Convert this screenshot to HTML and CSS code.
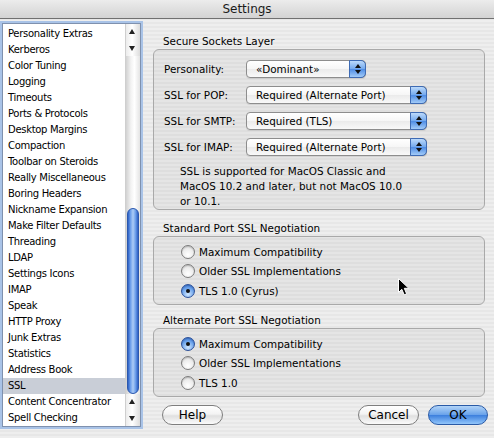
FILE: index.html
```html
<!DOCTYPE html>
<html>
<head>
<meta charset="utf-8">
<title>Settings</title>
<link rel="stylesheet" href="styles.css">
</head>
<body>
<div class="window">
  <div class="titlebar">Settings</div>
  <div class="main">
    <div class="list">
      <ul class="items">
        <li>Personality Extras</li>
        <li>Kerberos</li>
        <li>Color Tuning</li>
        <li>Logging</li>
        <li>Timeouts</li>
        <li>Ports &amp; Protocols</li>
        <li>Desktop Margins</li>
        <li>Compaction</li>
        <li>Toolbar on Steroids</li>
        <li>Really Miscellaneous</li>
        <li>Boring Headers</li>
        <li>Nickname Expansion</li>
        <li>Make Filter Defaults</li>
        <li>Threading</li>
        <li>LDAP</li>
        <li>Settings Icons</li>
        <li>IMAP</li>
        <li>Speak</li>
        <li>HTTP Proxy</li>
        <li>Junk Extras</li>
        <li>Statistics</li>
        <li>Address Book</li>
        <li class="selected">SSL</li>
        <li>Content Concentrator</li>
        <li>Spell Checking</li>
      </ul>
      <div class="scrollbar">
        <div class="arrow up"></div>
        <div class="arrow down"></div>
        <div class="track"><div class="thumb"></div></div>
        <div class="arrow up"></div>
        <div class="arrow down"></div>
      </div>
    </div>
    <div class="panel">
      <div class="group-label">Secure Sockets Layer</div>
      <div class="group ssl">
        <div class="field"><span class="label">Personality:</span><div class="popup short"><span class="value">«Dominant»</span><span class="stepper"></span></div></div>
        <div class="field"><span class="label">SSL for POP:</span><div class="popup"><span class="value">Required (Alternate Port)</span><span class="stepper"></span></div></div>
        <div class="field"><span class="label">SSL for SMTP:</span><div class="popup"><span class="value">Required (TLS)</span><span class="stepper"></span></div></div>
        <div class="field"><span class="label">SSL for IMAP:</span><div class="popup"><span class="value">Required (Alternate Port)</span><span class="stepper"></span></div></div>
        <p class="note">SSL is supported for MacOS Classic and<br>MacOS 10.2 and later, but not MacOS 10.0<br>or 10.1.</p>
      </div>
      <div class="group-label">Standard Port SSL Negotiation</div>
      <div class="group radios">
        <div class="radio-row"><span class="radio"></span><span>Maximum Compatibility</span></div>
        <div class="radio-row"><span class="radio"></span><span>Older SSL Implementations</span></div>
        <div class="radio-row"><span class="radio on"></span><span>TLS 1.0 (Cyrus)</span></div>
      </div>
      <div class="group-label">Alternate Port SSL Negotiation</div>
      <div class="group radios">
        <div class="radio-row"><span class="radio on"></span><span>Maximum Compatibility</span></div>
        <div class="radio-row"><span class="radio"></span><span>Older SSL Implementations</span></div>
        <div class="radio-row"><span class="radio"></span><span>TLS 1.0</span></div>
      </div>
      <div class="buttons">
        <div class="btn help">Help</div>
        <div class="btn">Cancel</div>
        <div class="btn default">OK</div>
      </div>
    </div>
  </div>
  <svg class="cursor" width="14" height="20" viewBox="0 0 14 20"><path d="M1.5 1.5 L1.5 15.5 L4.8 12.3 L7.2 17.8 L9.6 16.8 L7.3 11.3 L11.8 11.3 Z" fill="#000" stroke="#fff" stroke-width="1" stroke-linejoin="round"/></svg>
</div>
</body>
</html>
```
FILE: styles.css
```css
html, body {
  margin: 0;
  padding: 0;
}
body {
  width: 494px;
  height: 438px;
  overflow: hidden;
  font-family: "DejaVu Sans", "Liberation Sans", sans-serif;
  font-size: 10.4px;
  color: #000;
  background: repeating-linear-gradient(to bottom, #eeeeee 0 2px, #e7e7e7 2px 4px);
}
.window {
  position: relative;
  height: 438px;
}
.titlebar {
  height: 18px;
  line-height: 18px;
  border-bottom: 1px solid #707070;
  background: linear-gradient(#ececec, #d3d3d3);
  text-align: center;
  font-size: 12px;
  color: #1a1a1a;
}
.main {
  display: flex;
  padding: 4px 0 0 2px;
}
.list {
  display: flex;
  width: 137px;
  height: 402px;
  border: 1px solid #7f91ae;
  box-shadow: 0 0 0 2px #a9c3e7;
  background: #fff;
}
.items {
  flex: 1;
  list-style: none;
  margin: 0;
  padding: 2px 0 0 0;
  overflow: hidden;
}
.items li {
  height: 16px;
  line-height: 16px;
  padding-left: 5px;
  font-size: 10px;
  letter-spacing: -0.3px;
  white-space: nowrap;
}
.items li.selected {
  background: #c9ced7;
}
.scrollbar {
  width: 15px;
  box-sizing: border-box;
  border-left: 1px solid #cfcfcf;
  display: flex;
  flex-direction: column;
}
.arrow {
  height: 16px;
  position: relative;
  background: linear-gradient(to right, #ececec, #ffffff 45%, #dcdcdc);
}
.arrow::before {
  content: "";
  position: absolute;
  left: 3px;
  top: 5px;
  border-left: 3.5px solid transparent;
  border-right: 3.5px solid transparent;
}
.arrow.up::before {
  border-bottom: 5px solid #222;
}
.arrow.down::before {
  top: 6px;
  border-top: 5px solid #222;
}
.track {
  flex: 1;
  display: flex;
  flex-direction: column;
  justify-content: flex-end;
  padding: 0 1px;
  background: linear-gradient(to right, #d2d2d2, #f2f2f2 35%, #ffffff 60%, #e4e4e4);
}
.thumb {
  height: 186px;
  box-sizing: border-box;
  border-radius: 7px;
  border: 1px solid #2b58ae;
  background: linear-gradient(to right, #2d60c4, #6d9fea 25%, #acccf6 50%, #6d9fea 75%, #2d60c4);
}
.panel {
  margin-left: 12px;
  width: 335px;
  padding-top: 10px;
}
.group-label {
  height: 16px;
  line-height: 16px;
  padding-left: 10px;
}
.group {
  width: 332px;
  box-sizing: border-box;
  border: 1px solid #a9a9a9;
  border-radius: 6px;
  background: rgba(0, 0, 0, 0.035);
}
.group.ssl {
  height: 161px;
  padding: 10px 0 0 10px;
  margin-bottom: 10px;
}
.field {
  display: flex;
  align-items: center;
  height: 18px;
  margin-bottom: 8px;
}
.label {
  width: 82px;
}
.popup {
  display: flex;
  align-items: center;
  width: 181px;
  height: 18px;
  box-sizing: border-box;
  padding-left: 9px;
  border: 1px solid #8d8d8d;
  border-radius: 4px;
  background: linear-gradient(#ffffff, #f6f6f6 50%, #ebebeb 52%, #f9f9f9);
  box-shadow: 0 1px 0 rgba(0, 0, 0, 0.08);
}
.popup.short {
  width: 120px;
}
.stepper {
  position: relative;
  width: 17px;
  height: 18px;
  box-sizing: border-box;
  margin: -1px -1px -1px auto;
  border: 1px solid #3e6bb4;
  border-radius: 0 5px 5px 0;
  background: linear-gradient(#bcdafb, #72a8ed 50%, #4f8de5 52%, #a2cbf8);
}
.stepper::before,
.stepper::after {
  content: "";
  position: absolute;
  left: 4.5px;
  border-left: 3px solid transparent;
  border-right: 3px solid transparent;
}
.stepper::before {
  top: 3px;
  border-bottom: 4px solid #111;
}
.stepper::after {
  bottom: 3px;
  border-top: 4px solid #111;
}
.note {
  margin: 0;
  padding-left: 16px;
  line-height: 15px;
}
.group.radios {
  height: 69px;
  padding: 5px 0 0 27px;
}
.group.radios.first {
  margin-bottom: 7px;
}
.group-label + .group.radios {
  margin-bottom: 7px;
}
.radio-row {
  display: flex;
  align-items: center;
  gap: 4px;
  height: 19.5px;
}
.radio {
  position: relative;
  width: 14px;
  height: 14px;
  box-sizing: border-box;
  border-radius: 50%;
  border: 1px solid #7c7c7c;
  background: radial-gradient(circle at 50% 72%, #ffffff, #ececec 55%, #c8c8c8);
  box-shadow: inset 0 1px 1px rgba(0, 0, 0, 0.15);
}
.radio.on {
  border-color: #2b4f98;
  background: radial-gradient(circle at 50% 78%, #d2e8ff, #6ea5ec 55%, #2f6bd0);
}
.radio.on::after {
  content: "";
  position: absolute;
  left: 4px;
  top: 4px;
  width: 4px;
  height: 4px;
  border-radius: 50%;
  background: #111;
}
.buttons {
  display: flex;
  gap: 9px;
  margin-top: 8px;
  padding-left: 9px;
}
.btn {
  width: 61px;
  height: 20px;
  box-sizing: border-box;
  border: 1px solid #7e7e7e;
  border-radius: 10px;
  font-size: 12px;
  line-height: 18px;
  text-align: center;
  background: linear-gradient(#ffffff, #f3f3f3 45%, #e0e0e0 55%, #fbfbfb);
}
.btn.help {
  margin-right: auto;
}
.btn.default {
  width: 60px;
  border-color: #2a5aa6;
  background: linear-gradient(#b2d4f8, #6aa3ea 48%, #3d80de 52%, #92c6fb);
}
.cursor {
  position: absolute;
  left: 397px;
  top: 277px;
}
```
